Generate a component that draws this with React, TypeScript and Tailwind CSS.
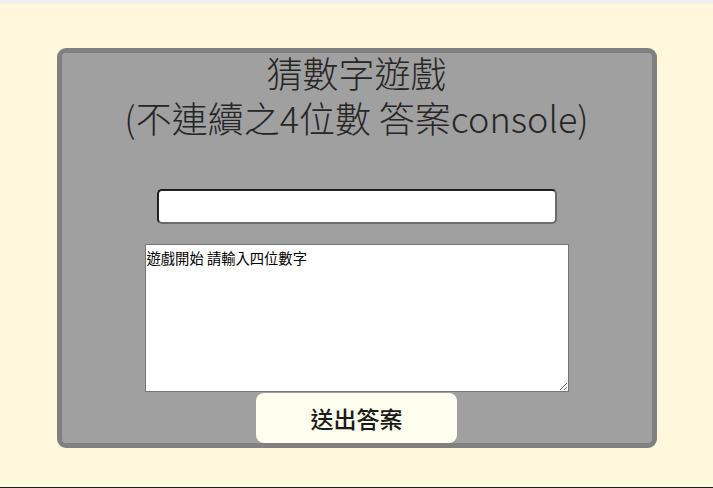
import React from 'react';

export default function App() {
  return (
    <div className="flex h-[488px] w-[713px] flex-col bg-[#fff7dc]">
      <div className="h-1 w-full bg-[#f0f0f0]" />
      <div className="flex flex-1 justify-center pt-[44px]">
        <div className="flex h-[400px] w-[600px] flex-col items-center rounded-[9px] border-[5px] border-[#808080] bg-[#a0a0a0]">
          <h1 className="mt-[-3px] text-center font-['Noto_Sans_CJK_TC',sans-serif] text-[36px] leading-[45px] font-light text-[#262626]">
            猜數字遊戲
            <br />
            (不連續之4位數 答案console)
          </h1>
          <input
            type="text"
            className="mt-[49px] h-[35px] w-[400px] rounded-[5px] border-2 border-t-[#1f1f1f] border-l-[#1f1f1f] border-r-[#6b6b6b] border-b-[#6b6b6b] bg-white px-1 outline-none"
          />
          <textarea
            readOnly
            defaultValue="遊戲開始 請輸入四位數字"
            className="mt-[20px] h-[149px] w-[424px] resize border border-[#767676] bg-white px-[1px] pt-[4px] font-['Noto_Sans_CJK_TC',sans-serif] text-[14.3px] leading-[18px] text-black"
          />
          <button className="mt-px h-[50px] w-[201px] rounded-[8px] bg-[#fffff0] font-['Noto_Sans_CJK_TC',sans-serif] text-[23px] font-medium text-[#1a1a1a]">
            送出答案
          </button>
        </div>
      </div>
      <div className="h-px w-full bg-[#1c1c1c]" />
    </div>
  );
}
